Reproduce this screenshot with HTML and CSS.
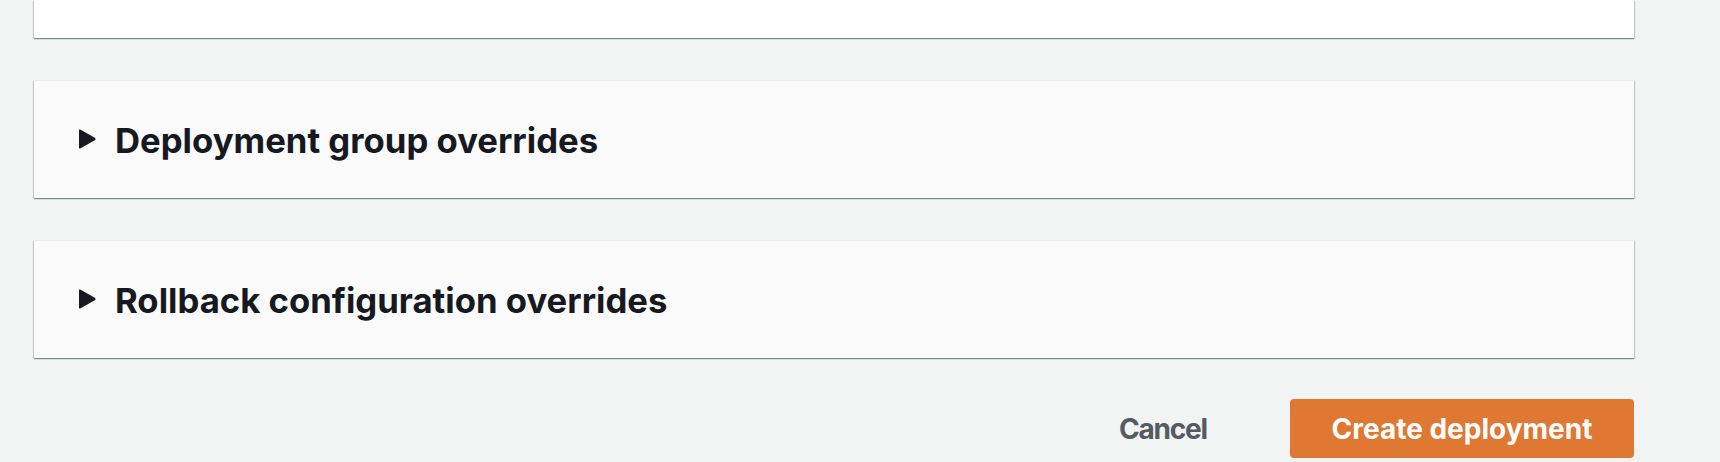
FILE: index.html
```html
<!DOCTYPE html>
<html lang="en">
<head>
<meta charset="utf-8">
<title>Create deployment</title>
<link rel="stylesheet" href="styles.css">
</head>
<body>
<main class="page">
  <section class="card card-top"></section>

  <section class="card card-expand">
    <div class="expand-header">
      <svg class="caret" width="17" height="20" viewBox="0 0 17 20" aria-hidden="true">
        <path d="M1.2 0.6 L16.2 9.1 Q17 10 16.2 10.9 L1.2 19.4 Q0 20 0 18.7 L0 1.3 Q0 0 1.2 0.6 Z" fill="#16191f"/>
      </svg>
      <h2 class="expand-title">Deployment group overrides</h2>
    </div>
  </section>

  <section class="card card-expand">
    <div class="expand-header">
      <svg class="caret" width="17" height="20" viewBox="0 0 17 20" aria-hidden="true">
        <path d="M1.2 0.6 L16.2 9.1 Q17 10 16.2 10.9 L1.2 19.4 Q0 20 0 18.7 L0 1.3 Q0 0 1.2 0.6 Z" fill="#16191f"/>
      </svg>
      <h2 class="expand-title">Rollback configuration overrides</h2>
    </div>
  </section>

  <div class="actions">
    <button class="btn btn-link" type="button">Cancel</button>
    <button class="btn btn-primary" type="button">Create deployment</button>
  </div>
</main>
</body>
</html>
```
FILE: styles.css
```css
html, body {
  margin: 0;
  padding: 0;
  background: #f2f3f3;
}
body {
  font-family: Inter, "Liberation Sans", sans-serif;
  color: #16191f;
}
.page {
  width: 1600px;
  padding-left: 34px;
  display: flex;
  flex-direction: column;
}
.card {
  box-shadow: 0 1px 1px 0 rgba(0, 28, 36, 0.3),
              1px 1px 1px 0 rgba(0, 28, 36, 0.15),
              -1px 1px 1px 0 rgba(0, 28, 36, 0.15);
}
.card-top {
  height: 38px;
  background: #ffffff;
}
.card-expand {
  margin-top: 42px;
  height: 118px;
  box-sizing: border-box;
  background: #fafafa;
  border-top: 1px solid #eaeded;
  padding: 38px 0 0 45px;
}
.expand-header {
  display: flex;
  align-items: center;
  gap: 19px;
  height: 42px;
}
.caret {
  flex: none;
  display: block;
  margin-bottom: 3px;
}
.expand-title {
  margin: 0;
  font-size: 34.7px;
  line-height: 42px;
  font-weight: 700;
  color: #16191f;
  white-space: nowrap;
}
.actions {
  margin-top: 41px;
  display: flex;
  justify-content: flex-end;
  align-items: center;
}
.btn {
  font-family: Inter, "Liberation Sans", sans-serif;
  font-size: 28px;
  font-weight: 700;
  height: 59px;
  border: 0;
  border-radius: 4px;
  cursor: pointer;
  white-space: nowrap;
}
.btn-link {
  background: transparent;
  color: #545b64;
  padding: 0 40px;
  margin-right: 43px;
  letter-spacing: -1.2px;
}
.btn-primary {
  width: 344px;
  background: #de7833;
  color: #ffffff;
  padding: 0;
}
```
